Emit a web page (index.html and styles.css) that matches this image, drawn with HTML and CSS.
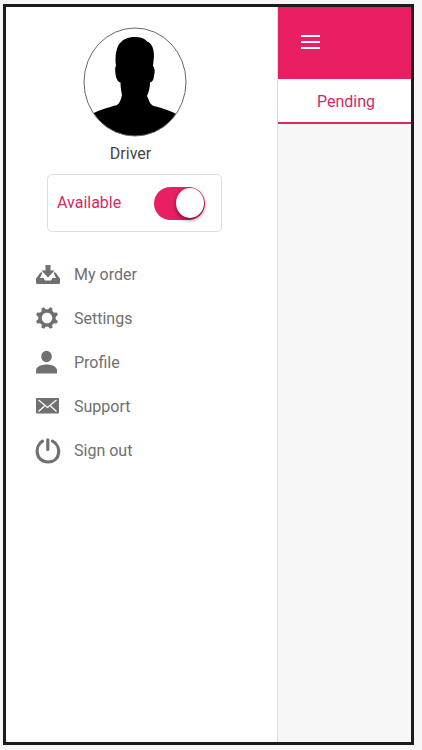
FILE: index.html
```html
<!DOCTYPE html>
<html lang="en">
<head>
<meta charset="utf-8">
<meta name="viewport" content="width=device-width, initial-scale=1">
<title>Driver</title>
<link rel="stylesheet" href="styles.css">
</head>
<body>
<div class="frame">
  <aside class="drawer">
    <div class="profile">
      <svg class="avatar" viewBox="0 0 104 110" aria-hidden="true">
        <defs><clipPath id="face"><ellipse cx="52" cy="55" rx="51" ry="54"/></clipPath></defs>
        <ellipse cx="52" cy="55" rx="51" ry="54" fill="#fff"/>
        <path clip-path="url(#face)" d="M39 68C38 64 37.500 59 37.500 55.500C34.500 55 33 51 32.500 47C32 43 32 40 33 39C32 32 32.500 25 35 19C39 12 45 10 52 10C57 10 61 11 64 14.500C69 16 71 22 71 29L70 39C72 41 72 45 71 49C70.500 53 69.500 55 67 55.500C67 60 66 65 64 69C66 73 67 78 71 79C80 81 88 84 97 89V111H6V89C14 83 24 81 34 78C37 76 38 72 39 68Z"/>
        <ellipse cx="52" cy="55" rx="51" ry="54" fill="none" stroke="#666" stroke-width="1"/>
      </svg>
      <h1 class="name">Driver</h1>
    </div>
    <label class="availability">
      <span>Available</span>
      <input class="switch" type="checkbox" role="switch" checked>
    </label>
    <nav class="menu">
      <a href="#orders">
        <svg viewBox="0 0 26 26" aria-hidden="true"><path d="M10.500 3h5v5.500h4L13 15.500 6.500 8.500h4z"/><path d="M5.500 10.500H7.500L5 16H8.500L10 18.500h6l1.500-2.500H21L18.500 10.500h2L25 16.500V20.500Q25 22 23.500 22H2.500Q1 22 1 20.500V16.500z"/></svg>
        My order
      </a>
      <a href="#settings">
        <svg viewBox="0 0 26 26" aria-hidden="true"><g transform="rotate(22.500 12 12)"><circle cx="12" cy="12" r="7" fill="none" stroke="currentColor" stroke-width="3.400"/><path id="tooth" d="M9.500 4.500L10.700 .8H13.300L14.500 4.500z"/><use href="#tooth" transform="rotate(45 12 12)"/><use href="#tooth" transform="rotate(90 12 12)"/><use href="#tooth" transform="rotate(135 12 12)"/><use href="#tooth" transform="rotate(180 12 12)"/><use href="#tooth" transform="rotate(225 12 12)"/><use href="#tooth" transform="rotate(270 12 12)"/><use href="#tooth" transform="rotate(315 12 12)"/></g></svg>
        Settings
      </a>
      <a href="#profile">
        <svg viewBox="0 0 26 26" aria-hidden="true"><ellipse cx="11.500" cy="6.500" rx="5.300" ry="5.700"/><path d="M1 23.500V20.500C1 16.500 6.500 14.500 11.500 14.500S22 16.500 22 20.500V23.500z"/></svg>
        Profile
      </a>
      <a href="#support">
        <svg viewBox="0 0 26 26" aria-hidden="true"><rect x="1" y="4" width="23" height="15.500" rx="1"/><path d="M3.500 6L12.500 13.500L21.500 6M3.500 17.500L9.500 12M21.500 17.500L15.500 12" fill="none" stroke="#fff" stroke-width="1.200"/></svg>
        Support
      </a>
      <a href="#signout">
        <svg viewBox="0 0 26 26" aria-hidden="true"><path d="M7.500 3.200C-.8 8 .2 24 13 24S26.800 8 17.500 3.200M12.800 1.800V11.500" fill="none" stroke="currentColor" stroke-width="3.200" stroke-linecap="round"/></svg>
        Sign out
      </a>
    </nav>
  </aside>
  <main class="screen">
    <header class="topbar">
      <button class="menu-button" type="button" aria-label="Menu">
        <svg viewBox="0 0 20 16" aria-hidden="true"><path d="M0 2h19M0 8h19M0 14h19" stroke="#fff" stroke-width="2"/></svg>
      </button>
    </header>
    <a class="tab" href="#pending">Pending</a>
  </main>
</div>
</body>
</html>
```
FILE: styles.css
```css
* {
  box-sizing: border-box;
}

body {
  display: flex;
  min-height: 100vh;
  margin: 0;
  padding: 4px 8px 5px 3px;
  background: #f7f7f7;
  color: #707070;
  font: 16px/20px Roboto, "Liberation Sans", sans-serif;
}

.frame {
  display: grid;
  grid-template-columns: 272fr 133fr;
  flex: 1;
  border: 3px solid #1c1c1c;
}

.drawer {
  background: #fff;
  border-right: 1px solid #dcdcdc;
}

.profile {
  display: flex;
  flex-direction: column;
  align-items: center;
  gap: 7px;
  padding: 20px 14px 0 0;
}

.avatar {
  width: 104px;
  height: 110px;
}

.name {
  margin: 0 8px 0 0;
  color: #444;
  font-size: 16px;
  font-weight: 400;
}

.availability {
  display: flex;
  align-items: center;
  justify-content: space-between;
  height: 58px;
  margin: 10px 55px 0 41px;
  padding: 0 16px 0 9px;
  border: 1px solid #dedede;
  border-radius: 5px;
  color: #d62a63;
}

.switch {
  display: flex;
  align-items: center;
  width: 51px;
  height: 33px;
  margin: 0;
  padding: 0 1px;
  appearance: none;
  border-radius: 17px;
  background: #e91e63;
}

.switch::before {
  width: 28px;
  height: 30px;
  border-radius: 50%;
  background: #fff;
  box-shadow: 0 2px 4px rgba(0, 0, 0, 0.5);
  content: "";
}

.switch:checked {
  justify-content: flex-end;
}

.menu {
  display: flex;
  flex-direction: column;
  padding: 21px 0 0 29px;
}

.menu a {
  display: flex;
  align-items: center;
  gap: 13px;
  height: 44px;
  color: inherit;
  text-decoration: none;
}

.menu svg {
  width: 26px;
  height: 26px;
  fill: currentColor;
}

.screen {
  background: #f7f7f7;
}

.topbar {
  display: flex;
  align-items: center;
  height: 72px;
  padding: 0 23px 2px;
  background: #e91e63;
}

.menu-button {
  padding: 0;
  border: 0;
  background: none;
}

.menu-button svg {
  display: block;
  width: 20px;
  height: 16px;
}

.tab {
  display: flex;
  align-items: center;
  justify-content: center;
  height: 45px;
  padding: 3px 0 0 3px;
  border-bottom: 2px solid #d62a57;
  background: #fff;
  color: #d62a63;
  text-decoration: none;
}
```
